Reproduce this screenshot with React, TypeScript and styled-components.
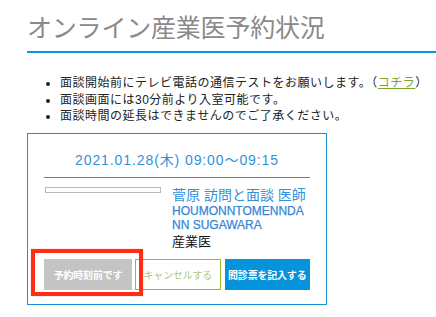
import * as React from 'react';
import styled, { createGlobalStyle } from 'styled-components';

const GlobalStyle = createGlobalStyle`
  html, body {
    margin: 0;
    padding: 0;
    background: #ffffff;
  }
  body {
    font-family: 'Liberation Sans', 'Noto Sans CJK JP', sans-serif;
    color: #222222;
  }
  * {
    box-sizing: border-box;
  }
`;

const Page = styled.div`
  padding-left: 27px;
  overflow: hidden;
`;

const Title = styled.h1`
  margin: 0;
  padding: 8px 0 7px;
  font-family: 'Noto Sans CJK JP', sans-serif;
  font-size: 25px;
  line-height: 36px;
  font-weight: 400;
  color: #8a8a8a;
  letter-spacing: -0.2px;
  border-bottom: 2px solid #0a97dd;
`;

const Notes = styled.ul`
  margin: 22px 0 0;
  padding-left: 33px;
  font-size: 12px;
  line-height: 16.7px;
  letter-spacing: 0.5px;
  color: #222222;
`;

const Link = styled.a`
  color: #79a72a;
  text-decoration: underline;
`;

const Card = styled.section`
  margin-top: 8px;
  width: 300px;
  border: 1px solid #1b8fd6;
  padding: 16px 16px 14px;
`;

const DateRow = styled.div`
  padding-bottom: 7px;
  border-bottom: 1px solid #1b95dc;
  text-align: center;
  font-size: 14px;
  line-height: 20px;
  letter-spacing: 0.9px;
  color: #2f92da;
`;

const Body = styled.div`
  display: flex;
  gap: 11px;
  margin-top: 8px;
`;

const Photo = styled.div`
  flex: none;
  width: 116px;
  height: 6px;
  margin: 1px 0 0 1px;
  border: 1px solid #b8b8b8;
`;

const Info = styled.div`
  width: 136px;
`;

const Name = styled.div`
  font-size: 14px;
  line-height: 18px;
  color: #2f92da;
`;

const Roman = styled.div`
  font-size: 12px;
  line-height: 14px;
  color: #3586d4;
  -webkit-text-stroke: 0.25px #3586d4;
  word-break: break-all;
`;

const Role = styled.div`
  font-size: 13px;
  line-height: 19px;
  color: #111111;
`;

const Actions = styled.div`
  display: flex;
  gap: 3px;
  margin-top: 8px;
`;

const Highlight = styled.div`
  position: relative;
  display: flex;
`;

const Marker = styled.div`
  position: absolute;
  left: -13px;
  top: -10px;
  right: -11px;
  bottom: -6px;
  border: 4px solid #ff2d12;
  box-shadow: 0 0 1px rgba(255, 60, 30, 0.6);
  pointer-events: none;
`;

const Button = styled.button<{ $kind: 'off' | 'cancel' | 'primary'; $w: number }>`
  width: ${p => p.$w}px;
  height: 31px;
  padding: 0;
  font-family: 'Liberation Sans', 'Noto Sans CJK JP', sans-serif;
  font-size: 10px;
  font-weight: 700;
  letter-spacing: -0.2px;
  cursor: pointer;
  border: 1px solid
    ${p => (p.$kind === 'off' ? '#c4c4c4' : p.$kind === 'cancel' ? '#93c02a' : '#0593dc')};
  background: ${p => (p.$kind === 'off' ? '#c4c4c4' : p.$kind === 'cancel' ? '#ffffff' : '#0593dc')};
  color: ${p => (p.$kind === 'cancel' ? '#b2c67c' : '#ffffff')};
  ${p => p.$kind === 'cancel' && 'font-weight: 400;'}
  ${p => p.$kind === 'primary' && 'margin-left: 1px;'}
`;

export default function App() {
  return (
    <>
      <GlobalStyle />
      <Page>
        <Title>オンライン産業医予約状況</Title>
        <Notes>
          <li>
            面談開始前にテレビ電話の通信テストをお願いします。（<Link href="#">コチラ</Link>）
          </li>
          <li>面談画面には30分前より入室可能です。</li>
          <li>面談時間の延長はできませんのでご了承ください。</li>
        </Notes>
        <Card>
          <DateRow>2021.01.28(木) 09:00〜09:15</DateRow>
          <Body>
            <Photo />
            <Info>
              <Name>菅原 訪問と面談 医師</Name>
              <Roman>HOUMONNTOMENNDANN SUGAWARA</Roman>
              <Role>産業医</Role>
            </Info>
          </Body>
          <Actions>
            <Highlight>
              <Button $kind="off" $w={88}>予約時刻前です</Button>
              <Marker />
            </Highlight>
            <Button $kind="cancel" $w={87}>キャンセルする</Button>
            <Button $kind="primary" $w={87}>問診票を記入する</Button>
          </Actions>
        </Card>
      </Page>
    </>
  );
}
